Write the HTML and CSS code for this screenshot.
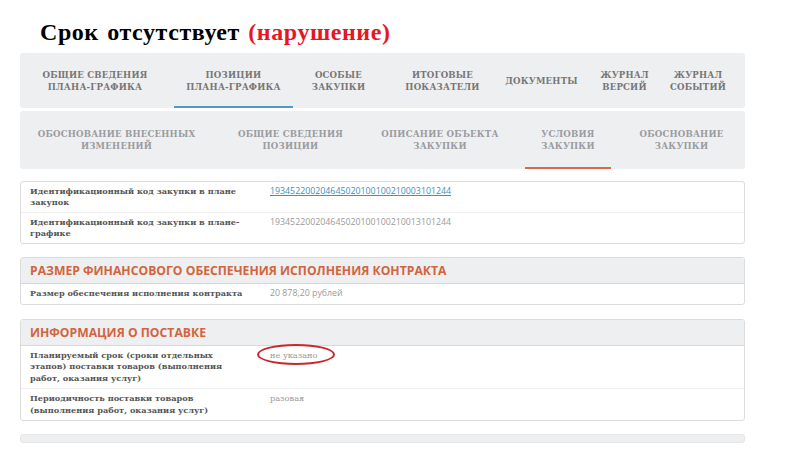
FILE: index.html
```html
<!DOCTYPE html>
<html lang="ru">
<head>
    <meta charset="UTF-8">
    <meta name="viewport" content="width=device-width, initial-scale=1.0">
    <title>Срок отсутствует</title>
    <link rel="stylesheet" href="styles.css">
</head>
<body>

    <!-- Slide title -->
    <h1 class="title">Срок отсутствует <span class="violation">(нарушение)</span></h1>

    <div class="page">

        <!-- Main tabs -->
        <nav class="tabs tabs-main">
            <a class="tab">ОБЩИЕ СВЕДЕНИЯ<br>ПЛАНА-ГРАФИКА</a>
            <a class="tab active">ПОЗИЦИИ<br>ПЛАНА-ГРАФИКА</a>
            <a class="tab">ОСОБЫЕ<br>ЗАКУПКИ</a>
            <a class="tab">ИТОГОВЫЕ<br>ПОКАЗАТЕЛИ</a>
            <a class="tab">ДОКУМЕНТЫ</a>
            <a class="tab">ЖУРНАЛ<br>ВЕРСИЙ</a>
            <a class="tab">ЖУРНАЛ<br>СОБЫТИЙ</a>
        </nav>

        <!-- Position tabs -->
        <nav class="tabs tabs-sub">
            <a class="tab">ОБОСНОВАНИЕ ВНЕСЕННЫХ<br>ИЗМЕНЕНИЙ</a>
            <a class="tab">ОБЩИЕ СВЕДЕНИЯ<br>ПОЗИЦИИ</a>
            <a class="tab">ОПИСАНИЕ ОБЪЕКТА<br>ЗАКУПКИ</a>
            <a class="tab active">УСЛОВИЯ<br>ЗАКУПКИ</a>
            <a class="tab">ОБОСНОВАНИЕ<br>ЗАКУПКИ</a>
        </nav>

        <!-- Codes -->
        <div class="card">
            <div class="row">
                <div class="label">Идентификационный код закупки в плане закупок</div>
                <div class="value code"><a class="link">193452200204645020100100210003101244</a></div>
            </div>
            <div class="row">
                <div class="label">Идентификационный код закупки в плане-графике</div>
                <div class="value code">193452200204645020100100210013101244</div>
            </div>
        </div>

        <!-- Contract security -->
        <div class="card section">
            <div class="section-head">РАЗМЕР ФИНАНСОВОГО ОБЕСПЕЧЕНИЯ ИСПОЛНЕНИЯ КОНТРАКТА</div>
            <div class="row">
                <div class="label label-wide">Размер обеспечения исполнения контракта</div>
                <div class="value code">20 878,20 рублей</div>
            </div>
        </div>

        <!-- Delivery -->
        <div class="card section">
            <div class="section-head">ИНФОРМАЦИЯ О ПОСТАВКЕ</div>
            <div class="row">
                <div class="label">Планируемый срок (сроки отдельных этапов) поставки товаров (выполнения работ, оказания услуг)</div>
                <div class="value marked">не указано</div>
            </div>
            <div class="row">
                <div class="label">Периодичность поставки товаров (выполнения работ, оказания услуг)</div>
                <div class="value">разовая</div>
            </div>
        </div>

        <div class="card stub"></div>

    </div>

</body>
</html>
```

FILE: styles.css
```css
body {
    margin: 0;
    background-color: #fff;
    font-family: "DejaVu Serif", serif;
    color: #555;
}
.title {
    margin: 0;
    height: 53px;
    padding: 19px 0 0 40px;
    box-sizing: border-box;
    font-family: "Liberation Serif", serif;
    font-size: 24px;
    line-height: 26px;
    font-weight: bold;
    letter-spacing: 0.55px;
    word-spacing: 2px;
    color: #000;
}
.violation {
    color: #e3191f;
}
.page {
    width: 725px;
    margin-left: 20px;
}

/* Tabs */
.tabs {
    display: grid;
    background-color: #eeeff1;
    border-radius: 3px;
}
.tabs-main {
    height: 55px;
    grid-template-columns: 150px 127px 83px 125px 73px 93px 54px;
}
.tabs-sub {
    height: 58px;
    margin-top: 3px;
    grid-template-columns: 193px 155px 144px 112px 115px;
}
.tab {
    position: relative;
    display: flex;
    align-items: center;
    justify-content: center;
    text-align: center;
    white-space: nowrap;
    font-size: 8.6px;
    line-height: 12px;
    font-weight: bold;
    letter-spacing: 0.2px;
    color: #777;
}
.tabs-sub .tab {
    color: #9a9c9f;
}
.tab.active::after {
    content: "";
    position: absolute;
    left: 4px;
    right: 4px;
    bottom: 0;
    height: 2px;
    background-color: #4b9cc8;
}
.tabs-sub .tab.active::after {
    left: 13px;
    right: 13px;
    background-color: #d66a45;
}

/* Cards */
.card {
    margin-top: 12px;
    border: 1px solid #dcdcdc;
    border-radius: 3px;
    background-color: #fff;
}
.section {
    margin-top: 13px;
}
.section + .section {
    margin-top: 14px;
}
.section-head {
    height: 25px;
    padding-left: 9px;
    background-color: #eeeff1;
    border-bottom: 1px solid #d7d7d7;
    font-family: "Open Sans", sans-serif;
    font-size: 12.2px;
    line-height: 25px;
    font-weight: bold;
    color: #d2643e;
}
.row {
    display: flex;
    padding: 3.5px 9px;
    font-size: 8.2px;
    line-height: 11.5px;
}
.section .row {
    padding: 4px 9px;
}
.row + .row {
    border-top: 1px solid #efefef;
}
.label {
    width: 212px;
    margin-right: 28px;
    font-weight: bold;
    color: #555;
}
.label-wide {
    width: 224px;
    margin-right: 16px;
}
.value {
    position: relative;
    color: #9a9a9a;
}
.code {
    font-family: "Open Sans", sans-serif;
    font-size: 8.8px;
}
.link {
    color: #3d8fc4;
    text-decoration: underline;
}
.marked::after {
    content: "";
    position: absolute;
    left: -13px;
    top: -6px;
    width: 74px;
    height: 17px;
    border: 2.5px solid #c8282c;
    border-radius: 50%;
}
.stub {
    height: 7px;
    margin-top: 13px;
    background-color: #eeeff1;
    border-color: #e6e6e6;
}
```
